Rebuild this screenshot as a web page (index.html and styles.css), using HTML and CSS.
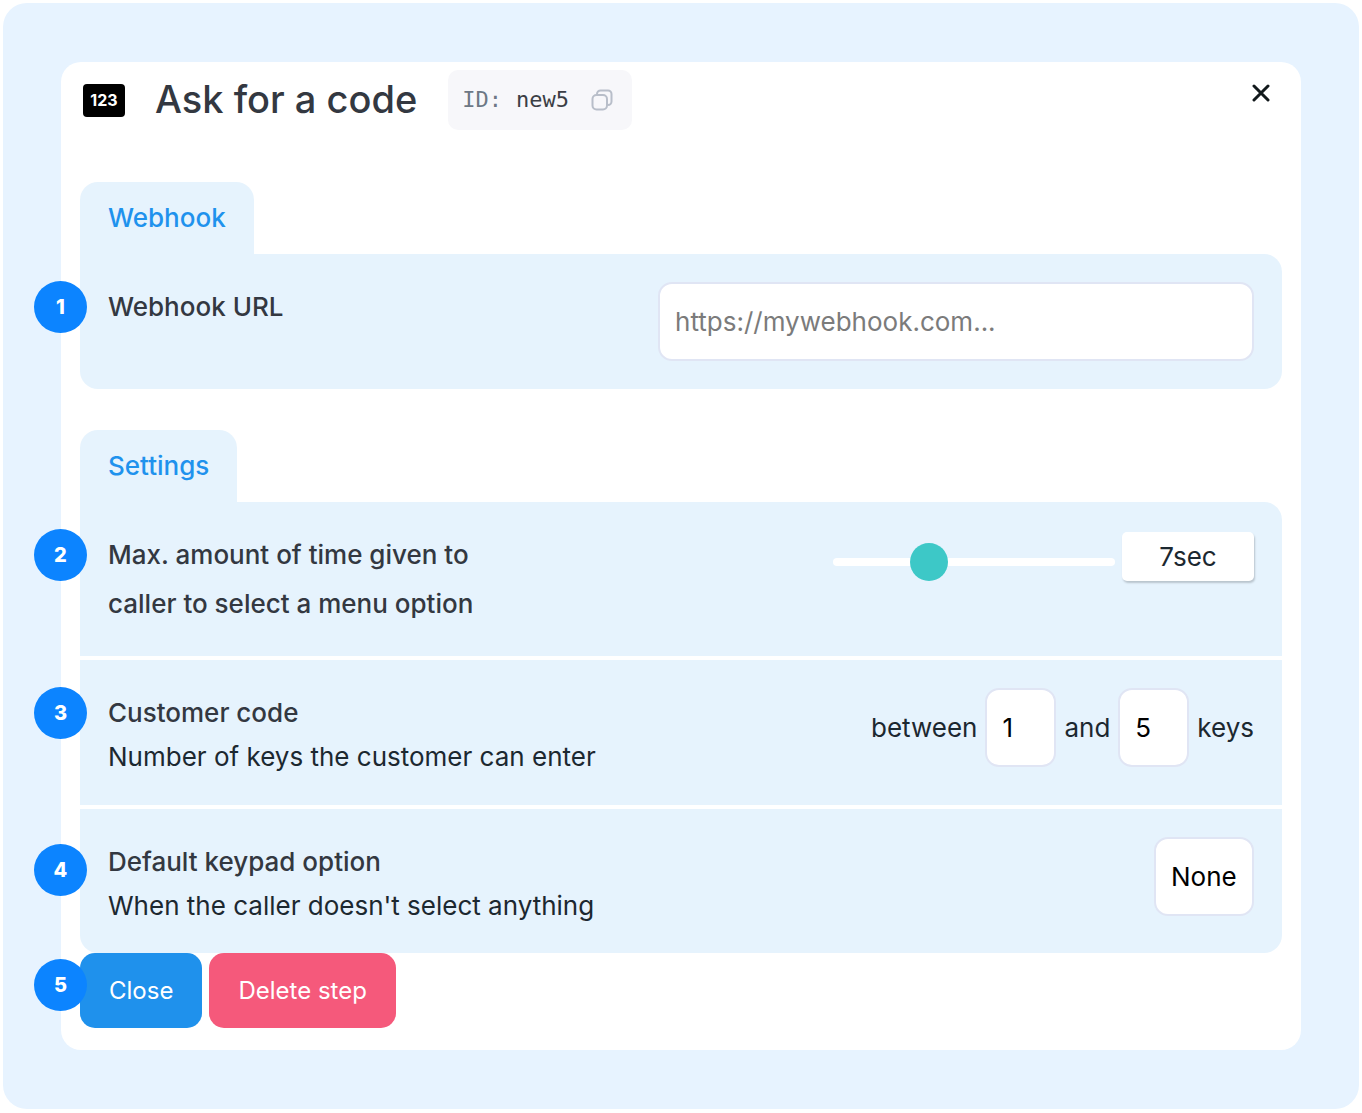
FILE: index.html
```html
<!DOCTYPE html>
<html lang="en">
<head>
<meta charset="utf-8">
<meta name="viewport" content="width=device-width, initial-scale=1">
<title>Ask for a code</title>
<link rel="stylesheet" href="styles.css">
</head>
<body>
<main class="stage">
  <form class="dialog">
    <header class="dialog-header">
      <span class="code-icon" aria-hidden="true">123</span>
      <h1 class="title">Ask for a code</h1>
      <div class="id-chip">
        <span class="id-label">ID:</span>
        <span class="id-value">new5</span>
        <button class="icon-button copy" type="button" aria-label="Copy ID">
          <svg width="22" height="22" viewBox="0 0 22 22" fill="none" stroke="currentColor" stroke-width="2">
            <rect x="1.5" y="6" width="14.5" height="14.5" rx="4"/>
            <path d="M6 6V5a3.5 3.5 0 0 1 3.500-3.500H17A3.500 3.500 0 0 1 20.500 5v7.500A3.500 3.500 0 0 1 17 16h-1"/>
          </svg>
        </button>
      </div>
      <button class="icon-button dismiss" type="button" aria-label="Close dialog">
        <svg width="18" height="18" viewBox="0 0 18 18" fill="none" stroke="currentColor" stroke-width="3" stroke-linecap="round">
          <path d="M2 2l14 14M16 2L2 16"/>
        </svg>
      </button>
    </header>

    <section class="group">
      <h2 class="tab">Webhook</h2>
      <div class="panel">
        <div class="row">
          <span class="badge">1</span>
          <label class="name" for="url">Webhook URL</label>
          <input class="field url" id="url" type="url" placeholder="https://mywebhook.com...">
        </div>
      </div>
    </section>

    <section class="group">
      <h2 class="tab">Settings</h2>
      <div class="panel">
        <div class="row">
          <span class="badge">2</span>
          <label class="name" for="time">Max. amount of time given to<br>caller to select a menu option</label>
          <div class="timer">
            <input class="slider" id="time" type="range" min="1" max="20" value="7">
            <output class="seconds" for="time">7sec</output>
          </div>
        </div>
        <div class="row">
          <span class="badge">3</span>
          <div class="text">
            <h3 class="name">Customer code</h3>
            <p class="hint">Number of keys the customer can enter</p>
          </div>
          <div class="range">
            <label for="min">between</label>
            <input class="field count" id="min" type="text" inputmode="numeric" value="1">
            <label for="max">and</label>
            <input class="field count" id="max" type="text" inputmode="numeric" value="5">
            <span>keys</span>
          </div>
        </div>
        <div class="row">
          <span class="badge badge-low">4</span>
          <div class="text">
            <label class="name" for="fallback">Default keypad option</label>
            <p class="hint">When the caller doesn't select anything</p>
          </div>
          <select class="field" id="fallback">
            <option>None</option>
          </select>
        </div>
      </div>
    </section>

    <footer class="actions">
      <span class="badge badge-high">5</span>
      <button class="button primary" type="button">Close</button>
      <button class="button danger" type="button">Delete step</button>
    </footer>
  </form>
</main>
</body>
</html>
```
FILE: styles.css
```css
* {
  box-sizing: border-box;
}

body {
  margin: 0;
  padding: 3px;
  background: #fff;
  color: #1c2830;
  font-family: Inter, "Liberation Sans", sans-serif;
  font-size: 26px;
  line-height: 40px;
}

h1, h2, h3, p {
  margin: 0;
}

.stage {
  padding: 59px 58px;
  border-radius: 24px;
  background: #e7f3ff;
}

.dialog {
  padding: 8px 19px 22px;
  border-radius: 20px;
  background: #fff;
}

.dialog-header {
  display: flex;
  align-items: center;
  margin-bottom: 52px;
  padding: 0 12px 0 3px;
}

.code-icon {
  width: 42px;
  border-radius: 4px;
  background: #000;
  color: #fff;
  font-size: 16px;
  font-weight: 700;
  line-height: 33px;
  text-align: center;
}

.title {
  margin: 0 31px 0 30px;
  color: #333841;
  font-size: 38px;
  font-weight: 500;
  line-height: 58px;
  padding-bottom: 2px;
}

.id-chip {
  display: flex;
  align-items: center;
  gap: 14px;
  height: 60px;
  padding: 0 19px 0 14px;
  border-radius: 10px;
  background: #f7f7fa;
  font-family: "DejaVu Sans Mono", monospace;
  font-size: 22px;
}

.id-label {
  color: #6d7885;
}

.id-value {
  color: #3b3e45;
}

.icon-button {
  display: flex;
  padding: 0;
  border: 0;
  background: none;
}

.copy {
  margin-left: 8px;
  color: #b8bec9;
}

.dismiss {
  align-self: flex-start;
  margin: 14px 0 0 auto;
  color: #12191c;
}

.group + .group {
  margin-top: 41px;
}

.tab {
  width: fit-content;
  padding: 16px 28px;
  border-radius: 18px 18px 0 0;
  background: #e6f3fd;
  color: #1f92ed;
  font-size: 26px;
  font-weight: 500;
}

.panel {
  border-radius: 0 18px 18px 18px;
  background: #e6f3fd;
}

.row {
  position: relative;
  display: flex;
  align-items: flex-start;
  justify-content: space-between;
  padding: 28px;
}

.row + .row {
  border-top: 4px solid #fff;
}

.row + .row:last-child {
  padding-bottom: 27px;
}

.name {
  display: block;
  color: #333841;
  font-size: 26px;
  font-weight: 500;
  line-height: 49px;
}

.field {
  height: 79px;
  padding: 0 15px;
  border: 2px solid #e0e5f4;
  border-radius: 14px;
  appearance: none;
  background: #fff;
  color: #000;
  font: inherit;
}

.field::placeholder {
  color: #7b7b7b;
  opacity: 1;
}

.url {
  width: 52%;
}

.count {
  width: 71px;
}

.timer {
  display: flex;
  gap: 7px;
}

.slider {
  width: 282px;
  height: 64px;
  margin: 0;
  appearance: none;
  background: none;
}

.slider::-webkit-slider-runnable-track {
  height: 8px;
  border-radius: 4px;
  background: #fff;
}

.slider::-webkit-slider-thumb {
  width: 38px;
  height: 38px;
  margin-top: -15px;
  border-radius: 50%;
  appearance: none;
  background: #3dc8c7;
}

.seconds {
  width: 132px;
  height: 49px;
  margin-top: 2px;
  border-radius: 5px;
  background: #fff;
  box-shadow: 1px 2px 2px #b9c4cd;
  line-height: 49px;
  text-align: center;
}

.range {
  display: flex;
  align-items: center;
  gap: 8px;
}

.actions {
  position: relative;
  display: flex;
  gap: 7px;
}

.button {
  height: 75px;
  padding: 0 29px;
  border: 0;
  border-radius: 15px;
  color: #fff;
  font-family: inherit;
  font-size: 24px;
}

.primary {
  background: #1f91ec;
}

.danger {
  background: #f5597b;
}

.badge {
  position: absolute;
  top: 27px;
  left: -46px;
  width: 53px;
  height: 52px;
  border-radius: 50%;
  background: #0c84ff;
  color: #fff;
  font-size: 20px;
  font-weight: 800;
  line-height: 52px;
  text-align: center;
}

.badge-low {
  top: 35px;
}

.badge-high {
  top: 6px;
}
```
